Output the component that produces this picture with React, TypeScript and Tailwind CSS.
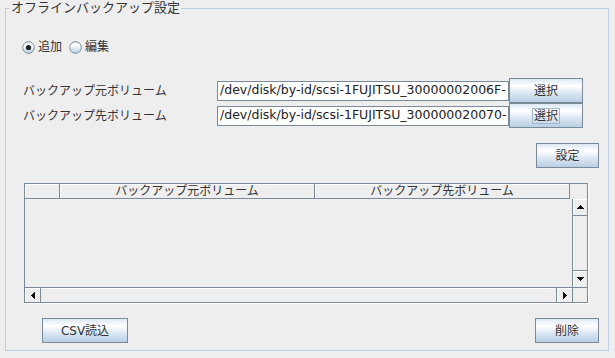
import React from "react";

const BTN =
  "h-[25px] border border-[#7a8a99] bg-[linear-gradient(to_bottom,#dde8f3_0%,#ffffff_30%,#dde8f3_60%,#b8cfe5_100%)] flex items-center justify-center text-[12px] leading-none text-[#333333]";

function Radio({ selected }: { selected?: boolean }) {
  const id = selected ? "rg1" : "rg2";
  return (
    <svg width="13" height="13" viewBox="0 0 13 13" className="shrink-0">
      <defs>
        <linearGradient id={id} x1="0" y1="0" x2="0" y2="1">
          <stop offset="0" stopColor="#dde8f3" />
          <stop offset="0.3" stopColor="#ffffff" />
          <stop offset="0.6" stopColor="#dde8f3" />
          <stop offset="1" stopColor="#b8cfe5" />
        </linearGradient>
      </defs>
      <circle cx="6.5" cy="6.5" r="5.8" fill={`url(#${id})`} stroke="#7a8a99" strokeWidth="1" />
      {selected && <circle cx="6.5" cy="6.5" r="2.6" fill="#222222" />}
    </svg>
  );
}

const UP = "M3 0h1v1h1v1h1v1h1v1H0V3h1V2h1V1h1z";
const DOWN = "M0 0h7v1h-1v1h-1v1h-1v1h-1v-1h-1v-1h-1v-1h-1z";
const LEFT = "M3 0h1v7h-1v-1h-1v-1h-1v-1h-1v-1h1v-1h1v-1h1z";
const RIGHT = "M0 0h1v1h1v1h1v1h1v1h-1v1h-1v1h-1v1h-1z";

function Tri({ d, w, h }: { d: string; w: number; h: number }) {
  return (
    <svg width={w} height={h} viewBox={`0 0 ${w} ${h}`} shapeRendering="crispEdges">
      <path d={d} fill="#111111" />
    </svg>
  );
}

export default function App() {
  return (
    <div className="w-[615px] h-[358px] bg-[#eeeeee] overflow-hidden font-['DejaVu_Sans','Noto_Sans_CJK_JP',sans-serif] text-[#333333]">
      <div className="pt-[8px] pl-[5px]">
        <div className="relative w-[604px] h-[343px] border border-[#b8cfe5] flex flex-col">
          <span className="absolute left-[4px] top-[-9px] h-[16px] px-[1px] bg-[#eeeeee] text-[13px] leading-[16px] whitespace-nowrap">
            オフラインバックアップ設定
          </span>

          {/* radio row */}
          <div className="mt-[30px] h-[16px] pl-[16px] flex items-center text-[12px] leading-none">
            <Radio selected />
            <span className="ml-[3px]">追加</span>
            <span className="ml-[7px]">
              <Radio />
            </span>
            <span className="ml-[3px]">編集</span>
          </div>

          {/* source row */}
          <div className="mt-[23px] h-[25px] pl-[17px] flex items-center text-[12px]">
            <span className="w-[194px] leading-none">バックアップ元ボリューム</span>
            <div className="w-[292px] h-[20px] border border-[#7a8a99] bg-white pl-[2px] flex items-center overflow-hidden whitespace-nowrap text-[12.5px] leading-none text-[#222222]">
              /dev/disk/by-id/scsi-1FUJITSU_30000002006F-
            </div>
            <div className={`${BTN} w-[74px]`}>選択</div>
          </div>

          {/* dest row */}
          <div className="h-[25px] pl-[17px] flex items-center text-[12px]">
            <span className="w-[194px] leading-none">バックアップ先ボリューム</span>
            <div className="w-[292px] h-[20px] border border-[#7a8a99] bg-white pl-[2px] flex items-center overflow-hidden whitespace-nowrap text-[12.5px] leading-none text-[#222222]">
              /dev/disk/by-id/scsi-1FUJITSU_300000020070-
            </div>
            <div className={`${BTN} w-[74px]`}>
              <span className="border border-[#a3b8cc] px-[1px] py-[1px]">選択</span>
            </div>
          </div>

          {/* settings button */}
          <div className="mt-[15px] pr-[9px] flex justify-end">
            <div className={`${BTN} w-[63px]`}>設定</div>
          </div>

          {/* table */}
          <div className="mt-[15px] ml-[18px] w-[565px] h-[121px] border-r border-b border-white">
            <div className="w-[564px] h-[120px] border border-[#7a8a99] flex flex-col">
              <div className="h-[15px] flex text-[12px] leading-none">
                <div className="w-[35px] border-r border-b border-[#7a8a99] shadow-[inset_1px_1px_0_#ffffff]" />
                <div className="w-[255px] border-r border-b border-[#7a8a99] shadow-[inset_1px_1px_0_#ffffff] flex items-center justify-center">
                  バックアップ元ボリューム
                </div>
                <div className="w-[255px] border-r border-b border-[#7a8a99] shadow-[inset_1px_1px_0_#ffffff] flex items-center justify-center">
                  バックアップ先ボリューム
                </div>
                <div className="flex-1" />
              </div>
              <div className="h-[88px] flex">
                <div className="flex-1" />
                <div className="w-[15px] border-l border-[#7a8a99] flex flex-col">
                  <div className="h-[17px] border-b border-[#7a8a99] shadow-[inset_1px_1px_0_#ffffff] flex items-center justify-center">
                    <Tri d={UP} w={7} h={4} />
                  </div>
                  <div className="flex-1 shadow-[inset_1px_0_0_#ffffff]" />
                  <div className="h-[17px] border-t border-[#7a8a99] shadow-[inset_1px_1px_0_#ffffff] flex items-center justify-center">
                    <Tri d={DOWN} w={7} h={4} />
                  </div>
                </div>
              </div>
              <div className="h-[15px] border-t border-[#7a8a99] flex">
                <div className="w-[16px] border-r border-[#7a8a99] shadow-[inset_1px_1px_0_#ffffff] flex items-center justify-center">
                  <Tri d={LEFT} w={4} h={7} />
                </div>
                <div className="flex-1 shadow-[inset_0_1px_0_#ffffff]" />
                <div className="w-[16px] border-l border-[#7a8a99] shadow-[inset_1px_1px_0_#ffffff] flex items-center justify-center">
                  <Tri d={RIGHT} w={4} h={7} />
                </div>
                <div className="w-[15px] border-l border-[#7a8a99]" />
              </div>
            </div>
          </div>

          {/* bottom buttons */}
          <div className="mt-[14px] pl-[36px] pr-[9px] flex justify-between">
            <div className={`${BTN} w-[86px]`}>CSV読込</div>
            <div className={`${BTN} w-[64px]`}>削除</div>
          </div>
        </div>
      </div>
    </div>
  );
}
